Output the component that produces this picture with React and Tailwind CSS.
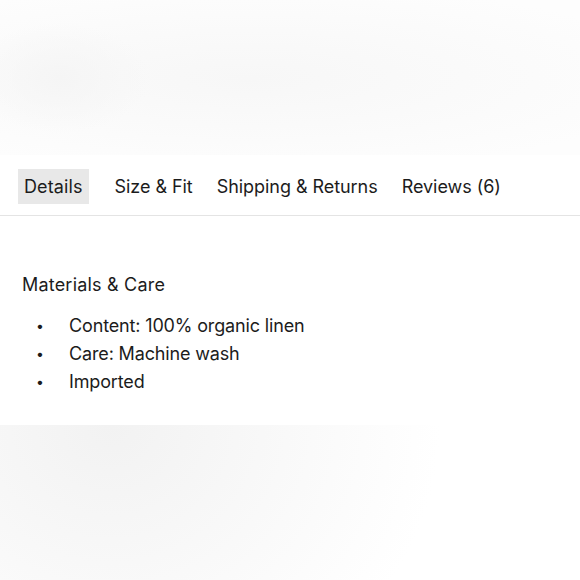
import React from 'react';

const tabs = ['Details', 'Size & Fit', 'Shipping & Returns', 'Reviews (6)'];

const items = ['Content: 100% organic linen', 'Care: Machine wash', 'Imported'];

export default function App() {
    return (
        <div className="relative w-full h-[580px] overflow-hidden bg-white text-[#1c1c1c] font-['Inter',sans-serif]">
            {/* blurred page above the sheet */}
            <div className="h-[155px] bg-[radial-gradient(ellipse_90px_55px_at_60px_78px,#f5f5f5,transparent),radial-gradient(ellipse_430px_95px_at_250px_78px,#f7f7f7,#fdfdfd_100%)]" />

            {/* tabs */}
            <div className="flex items-center h-[61px] pt-[3px] px-[18px] gap-[12px] border-b border-[#e4e4e4]">
                {tabs.map((tab, i) => (
                    <button
                        key={tab}
                        className={`h-[35px] px-[6px] pt-[1px] text-[18px] leading-none ${i === 0 ? 'bg-[#e8e8e8] mr-[8px] tracking-[0.1px]' : 'tracking-[-0.05px]'}`}
                    >
                        {tab}
                    </button>
                ))}
            </div>

            {/* panel content */}
            <div className="px-[22px] pt-[55px]">
                <h3 className="text-[18px] leading-[28px] tracking-[0.2px]">Materials & Care</h3>
                <ul className="mt-[12px]">
                    {items.map(item => (
                        <li key={item} className="flex items-center h-[28px] text-[18px] tracking-[-0.15px]">
                            <span className="w-[47px] pl-[14px] text-[14px]">•</span>
                            <span>{item}</span>
                        </li>
                    ))}
                </ul>
                <p className="mt-[25px] pl-[43px] text-[18px] leading-[28px]">Availability</p>
            </div>

            {/* blurred page below the sheet */}
            <div className="absolute inset-x-0 top-[425px] bottom-0 bg-[radial-gradient(ellipse_330px_300px_at_110px_0px,#f2f2f2,#ffffff_100%)]" />
        </div>
    );
}
